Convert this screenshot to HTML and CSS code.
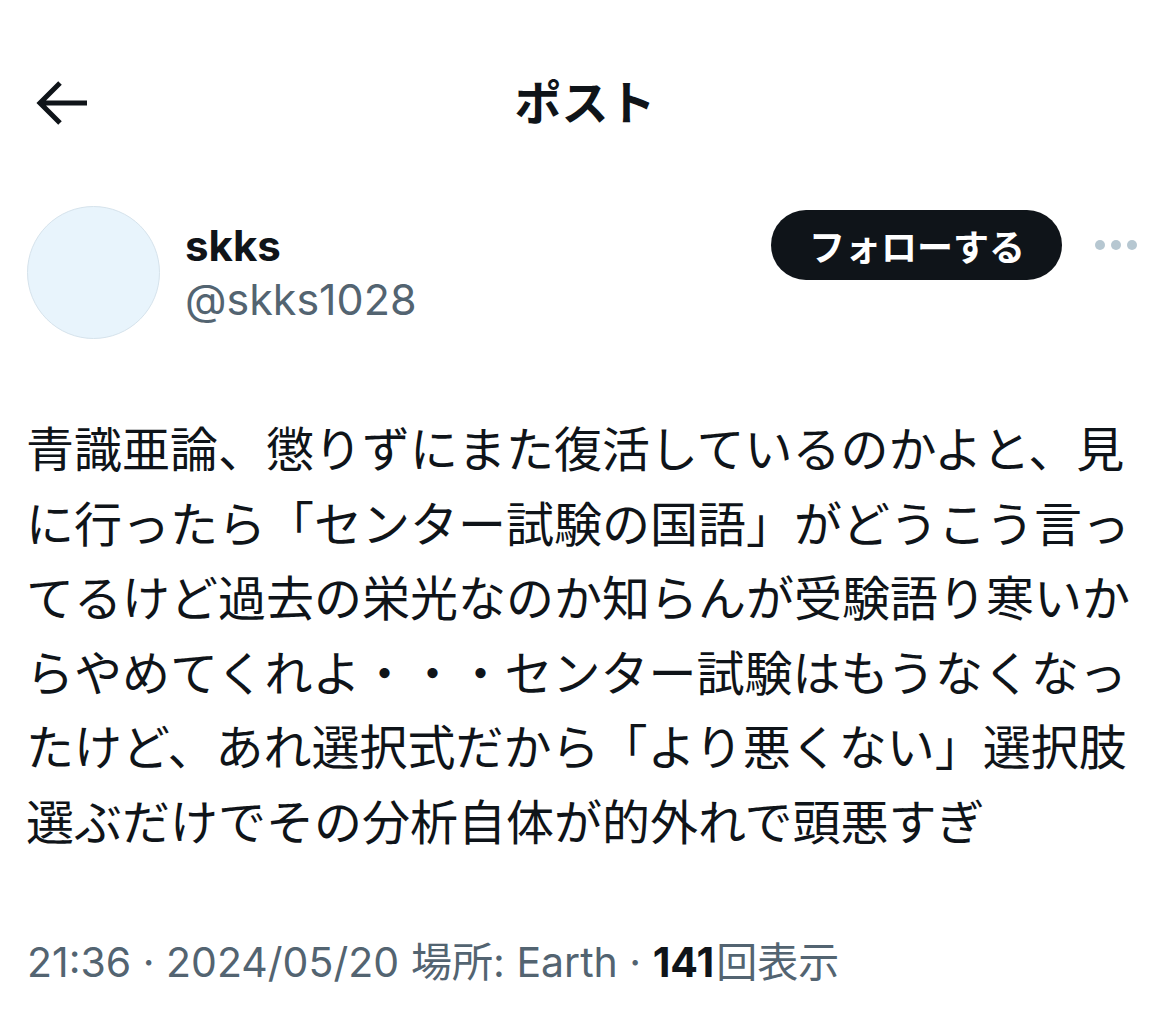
FILE: index.html
```html
<!DOCTYPE html>
<html lang="ja">
<head>
<meta charset="utf-8">
<title>ポスト</title>
<link rel="stylesheet" href="styles.css">
</head>
<body>
<header class="topbar">
  <div class="back">
    <svg class="back-icon" viewBox="0 0 60 50" width="60" height="50" aria-hidden="true">
      <path d="M8 25 H55 M28 5 L8 25 L28 45" fill="none" stroke="#0f1419" stroke-width="5"/>
    </svg>
  </div>
  <h1 class="title">ポスト</h1>
  <div class="spacer"></div>
</header>

<section class="profile">
  <div class="avatar"></div>
  <div class="names">
    <div class="name">skks</div>
    <div class="handle">@skks1028</div>
  </div>
  <div class="actions">
    <button class="follow">フォローする</button>
    <div class="more" aria-label="more">
      <span class="dot"></span><span class="dot"></span><span class="dot"></span>
    </div>
  </div>
</section>

<p class="post-text">青識亜論、懲りずにまた復活しているのかよと、見に行ったら「センター試験の国語」がどうこう言ってるけど過去の栄光なのか知らんが受験語り寒いからやめてくれよ・・・センター試験はもうなくなったけど、あれ選択式だから「より悪くない」選択肢選ぶだけでその分析自体が的外れで頭悪すぎ</p>

<footer class="meta">
  <span>21:36 · 2024/05/20</span>
  <span>場所: Earth · <b class="count">141</b>回表示</span>
</footer>
</body>
</html>
```

FILE: styles.css
```css
html, body {
  margin: 0;
  padding: 0;
  background: #ffffff;
}

body {
  width: 1170px;
  color: #0f1419;
  font-family: Inter, "Noto Sans CJK JP", sans-serif;
}

.topbar {
  margin-top: 53px;
  height: 100px;
  display: grid;
  grid-template-columns: 1fr auto 1fr;
  align-items: center;
  padding: 0 32px;
}

.back {
  display: flex;
  align-items: center;
}

.back-icon {
  display: block;
}

.title {
  margin: 0 0 6px;
  font-family: "Noto Sans CJK JP", sans-serif;
  font-weight: 700;
  font-size: 47px;
  line-height: 60px;
  color: #0f1419;
}

.profile {
  margin-top: 53px;
  display: flex;
  align-items: flex-start;
  padding: 0 33px 0 27px;
}

.avatar {
  width: 131px;
  height: 131px;
  border-radius: 50%;
  background: #e8f4fc;
  border: 1px solid #d6e3ec;
  flex: none;
}

.names {
  margin-left: 25px;
  padding-top: 14px;
}

.name {
  font-family: Inter, sans-serif;
  font-weight: 700;
  font-size: 42px;
  line-height: 52px;
  color: #0f1419;
}

.handle {
  font-family: Inter, sans-serif;
  font-weight: 400;
  font-size: 43px;
  line-height: 54px;
  color: #536471;
}

.actions {
  margin-left: auto;
  margin-top: 4px;
  display: flex;
  align-items: center;
  gap: 33px;
}

.follow {
  height: 70px;
  padding: 0 37px 0 38px;
  border: none;
  border-radius: 35px;
  background: #0f1419;
  color: #ffffff;
  font-family: "Noto Sans CJK JP", sans-serif;
  font-weight: 700;
  font-size: 36px;
  line-height: 70px;
}

.more {
  display: flex;
  gap: 6px;
  align-items: center;
}

.dot {
  width: 10px;
  height: 10px;
  border-radius: 50%;
  background: #b6c7d1;
}

.post-text {
  margin: 70px 0 0;
  padding: 0 24px 0 26px;
  font-family: "Noto Sans CJK JP", sans-serif;
  font-weight: 400;
  font-size: 48px;
  line-height: 74.5px;
  color: #0f1419;
}

.meta {
  margin-top: 78px;
  padding: 0 27px;
  font-family: Inter, "Noto Sans CJK JP", sans-serif;
  font-size: 41px;
  line-height: 56px;
  color: #536471;
  display: flex;
  gap: 12px;
}

.count {
  font-weight: 700;
  color: #0f1419;
  margin-right: 2px;
}
```
